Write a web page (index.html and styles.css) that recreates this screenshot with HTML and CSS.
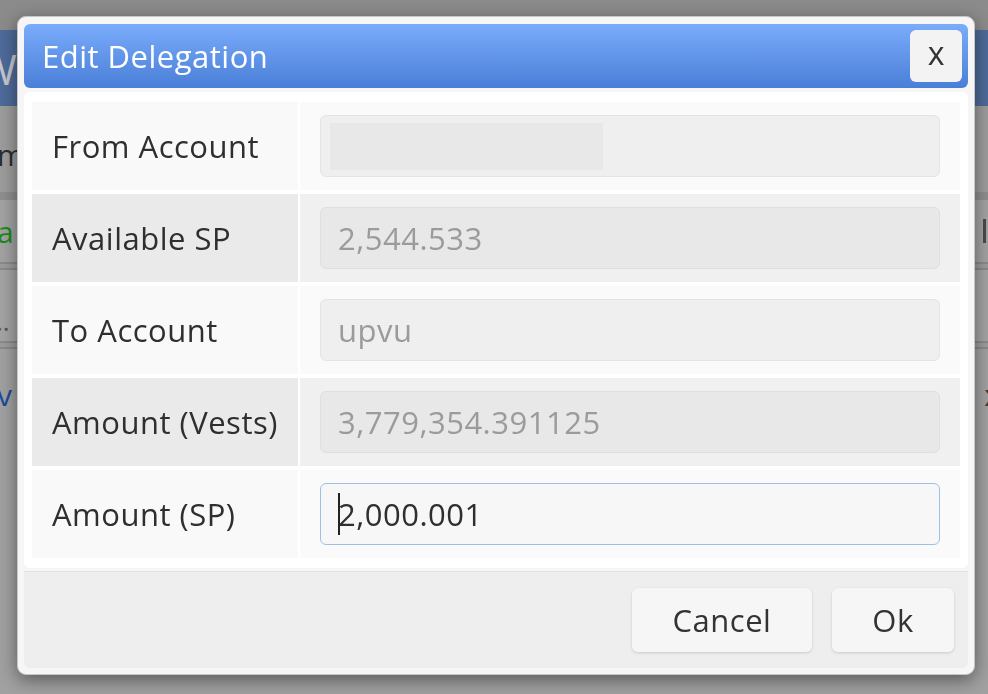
FILE: index.html
```html
<!DOCTYPE html>
<html>
<head>
    <title>Edit Delegation</title>
    <meta name="viewport" content="width=device-width, initial-scale=1.0">
    <link rel="stylesheet" href="styles.css">
</head>
<body>
    <!-- page behind the modal (dimmed) -->
    <div class="page">
        <div class="page-top"></div>
        <div class="page-header">
            <span class="brand">W</span>
        </div>
        <div class="page-row row-tabs">
            <span class="txt-dark">m</span>
        </div>
        <div class="page-rule"></div>
        <div class="page-row row-balance">
            <span class="txt-green">a</span>
            <span class="edge-btn"></span>
        </div>
        <div class="page-line"></div>
        <div class="page-row row-dots">
            <span class="dots">..</span>
        </div>
        <div class="page-line"></div>
        <div class="page-row row-link">
            <span class="txt-blue">v</span>
            <span class="edge-mark">x</span>
        </div>
    </div>

    <!-- modal -->
    <div class="modal">
        <div class="modal-header">
            <h4 class="modal-title">Edit Delegation</h4>
            <button class="close">x</button>
        </div>

        <div class="modal-body">
            <div class="form-table">
                <div class="form-row">
                    <div class="cell-label">From Account</div>
                    <div class="cell-value">
                        <div class="field"><span class="redacted"></span></div>
                    </div>
                </div>
                <div class="form-row alt">
                    <div class="cell-label">Available SP</div>
                    <div class="cell-value">
                        <div class="field">2,544.533</div>
                    </div>
                </div>
                <div class="form-row">
                    <div class="cell-label">To Account</div>
                    <div class="cell-value">
                        <div class="field">upvu</div>
                    </div>
                </div>
                <div class="form-row alt">
                    <div class="cell-label">Amount (Vests)</div>
                    <div class="cell-value">
                        <div class="field">3,779,354.391125</div>
                    </div>
                </div>
                <div class="form-row">
                    <div class="cell-label">Amount (SP)</div>
                    <div class="cell-value">
                        <div class="field editable"><span class="caret"></span>2,000.001</div>
                    </div>
                </div>
            </div>
        </div>

        <div class="modal-footer">
            <button class="btn btn-cancel">Cancel</button>
            <button class="btn btn-ok">Ok</button>
        </div>
    </div>
</body>
</html>
```

FILE: styles.css
```css
/* global */
* {
    box-sizing: border-box;
}
body {
    margin: 0;
    height: 694px;
    overflow: hidden;
    background-color: #a1a1a1;
    font-family: "Open Sans", "Noto Sans", sans-serif;
    color: #333;
}

/* dimmed page behind */
.page-top {
    height: 30px;
    background: #8b8b8b;
}
.page-header {
    height: 76px;
    background: #4e6b9a;
    display: flex;
    align-items: center;
    overflow: hidden;
}
.brand {
    font-size: 42px;
    color: #c4c8cf;
    margin-left: -22px;
}
.page-row {
    display: flex;
    justify-content: space-between;
    align-items: center;
    font-size: 30px;
    overflow: hidden;
}
.row-tabs {
    height: 86px;
    background: #9d9d9d;
    padding-top: 10px;
}
.txt-dark {
    color: #2e2e2e;
    margin-left: -3px;
}
.page-rule {
    height: 8px;
    background: #8f8f8f;
}
.row-balance {
    height: 62px;
    background: #a3a3a3;
}
.txt-green {
    color: #1b8a1b;
    margin-left: -3px;
}
.edge-btn {
    width: 5px;
    height: 24px;
    border-left: 3px solid #4a4a4a;
}
.page-line {
    height: 8px;
    border-top: 2px solid #8a8a8a;
    border-bottom: 2px solid #8a8a8a;
    background: #9c9c9c;
}
.row-dots {
    height: 71px;
    background: #a4a4a4;
    padding-top: 30px;
}
.dots {
    color: #555;
    font-size: 26px;
    margin-left: -4px;
}
.row-link {
    height: 90px;
    background: #a1a1a1;
}
.txt-blue {
    color: #1e4a98;
    margin-left: -3px;
}
.edge-mark {
    color: #3a3a3a;
    margin-right: -12px;
}

/* modal */
.modal {
    position: fixed;
    left: 17px;
    top: 16px;
    width: 958px;
    height: 659px;
    padding: 7px 6px 6px;
    background: #f6f6f6;
    border: 1px solid #c6c6c6;
    border-radius: 9px;
    box-shadow: 0 5px 18px rgba(0, 0, 0, 0.45);
    display: flex;
    flex-direction: column;
    letter-spacing: 0.5px;
}
.modal-header {
    height: 64px;
    flex: none;
    display: flex;
    align-items: center;
    justify-content: space-between;
    padding: 0 6px 0 18px;
    background: linear-gradient(#7aacfb, #4a7fd8);
    border-radius: 6px;
    color: #fff;
}
.modal-title {
    margin: 0;
    font-size: 31px;
    font-weight: 400;
}
.close {
    width: 52px;
    height: 52px;
    border: 0;
    border-radius: 6px;
    background: #f3f3f3;
    font-family: "Open Sans", sans-serif;
    font-size: 32px;
    line-height: 1;
    color: #333;
    padding: 0 0 6px;
}

.modal-body {
    margin-top: 4px;
    height: 476px;
    flex: none;
    padding: 10px 8px;
    background: #fff;
    border-radius: 6px;
}
.form-table {
    display: flex;
    flex-direction: column;
    gap: 4px;
}
.form-row {
    display: grid;
    grid-template-columns: 266px 1fr;
    column-gap: 2px;
    height: 88px;
}
.cell-label {
    display: flex;
    align-items: center;
    padding-left: 20px;
    font-size: 31px;
    color: #2f2f2f;
    background: #f9f9f9;
}
.cell-value {
    display: flex;
    align-items: center;
    padding: 0 20px;
    background: #fafafa;
}
.form-row.alt .cell-label {
    background: #eaeaea;
}
.form-row.alt .cell-value {
    background: #f0f0f0;
}
.field {
    width: 100%;
    height: 62px;
    display: flex;
    align-items: center;
    padding-left: 17px;
    font-size: 31px;
    color: #9b9b9b;
    background: #efefef;
    border: 1px solid #e4e4e4;
    border-radius: 6px;
}
.form-row.alt .field {
    background: #e8e8e8;
    border-color: #dfdfdf;
}
.redacted {
    width: 273px;
    height: 47px;
    margin-left: -8px;
    background: #e8e8e8;
}
.field.editable {
    color: #2f2f2f;
    background: #f7f7f7;
    border-color: #9fc0e5;
}
.caret {
    display: inline-block;
    width: 2px;
    height: 42px;
    background: #222;
    margin-right: -2px;
}

.modal-footer {
    margin-top: 3px;
    flex: 1;
    display: flex;
    justify-content: flex-end;
    align-items: center;
    gap: 20px;
    padding: 0 14px 1px;
    background: #eeeeee;
    border-top: 1px solid #e2e2e2;
    border-radius: 0 0 6px 6px;
}
.btn {
    height: 64px;
    border: 0;
    border-radius: 6px;
    background: #f6f6f6;
    box-shadow: 0 1px 3px rgba(0, 0, 0, 0.15);
    font-family: "Open Sans", sans-serif;
    font-size: 31px;
    letter-spacing: 0.5px;
    color: #333;
}
.btn-cancel {
    width: 180px;
}
.btn-ok {
    width: 122px;
}
```
